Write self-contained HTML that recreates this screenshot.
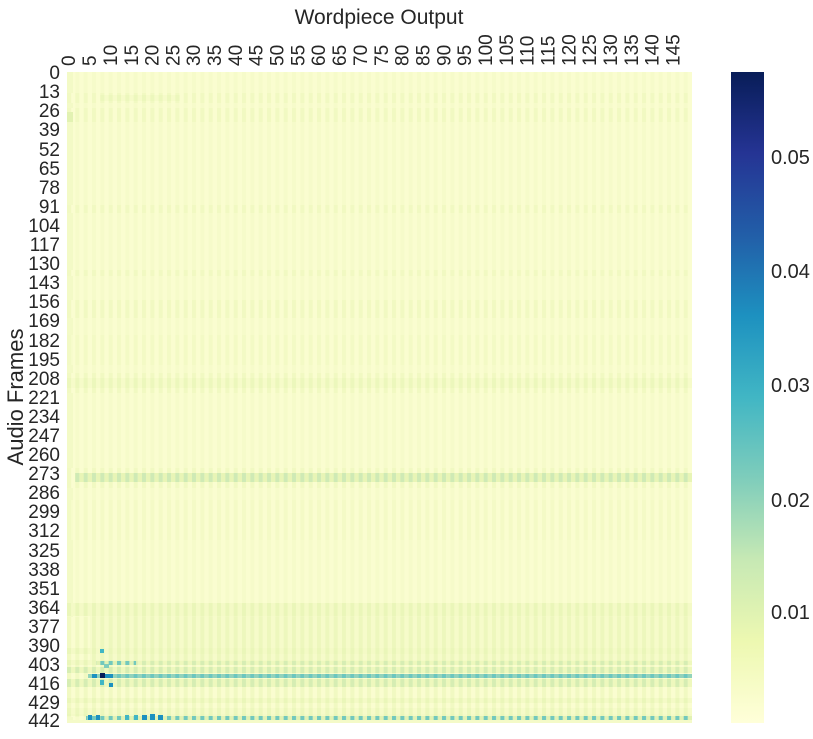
<!DOCTYPE html>
<html><head><meta charset="utf-8"><style>
html,body{margin:0;padding:0;background:#fff;width:813px;height:739px;overflow:hidden}
svg{display:block;font-family:"Liberation Sans",sans-serif}
</style></head><body>
<svg width="813" height="739" viewBox="0 0 813 739" xmlns="http://www.w3.org/2000/svg">
<defs>
<linearGradient id="cb" x1="0" y1="1" x2="0" y2="0">
<stop offset="0" stop-color="#ffffd9"/><stop offset="0.125" stop-color="#edf8b1"/>
<stop offset="0.25" stop-color="#c7e9b4"/><stop offset="0.375" stop-color="#7fcdbb"/>
<stop offset="0.5" stop-color="#41b6c4"/><stop offset="0.625" stop-color="#1d91c0"/>
<stop offset="0.75" stop-color="#225ea8"/><stop offset="0.875" stop-color="#253494"/>
<stop offset="1" stop-color="#081d58"/></linearGradient>
<pattern id="s1" patternUnits="userSpaceOnUse" x="67" width="8.334" height="10"><rect width="4.167" height="10" fill="#eaf6b9"/><rect x="4.167" width="4.167" height="10" fill="#f4fac6"/></pattern>
<pattern id="s2" patternUnits="userSpaceOnUse" x="67" width="8.334" height="10"><rect width="4.167" height="10" fill="#cfeab5"/><rect x="4.167" width="4.167" height="10" fill="#e8f5b6"/></pattern>
<pattern id="s3" patternUnits="userSpaceOnUse" x="67" width="8.334" height="10"><rect width="4.167" height="10" fill="#6cc6bf"/><rect x="4.167" width="4.167" height="10" fill="#92d3bb"/></pattern>
<pattern id="s4" patternUnits="userSpaceOnUse" x="67" width="8.334" height="10"><rect width="4.167" height="10" fill="#72c8bd"/><rect x="4.167" width="4.167" height="10" fill="#e2f2b4"/></pattern>
<pattern id="s5" patternUnits="userSpaceOnUse" x="67" width="8.334" height="10"><rect width="4.167" height="10" fill="#f1f9c2"/><rect x="4.167" width="4.167" height="10" fill="#fafdd0"/></pattern>
<pattern id="s6" patternUnits="userSpaceOnUse" x="67" width="8.334" height="10"><rect width="4.167" height="10" fill="#d6edb3"/><rect x="4.167" width="4.167" height="10" fill="#eef8bd"/></pattern>
</defs>
<text x="379" y="24" font-size="21" text-anchor="middle" fill="#262626">Wordpiece Output</text>
<text transform="translate(23,397) rotate(-90)" font-size="22" text-anchor="middle" fill="#262626">Audio Frames</text>
<!-- heatmap -->
<rect x="67" y="72" width="625" height="651" fill="#fafdd0"/>
<rect x="67" y="72" width="625" height="651" fill="url(#s5)" opacity="0.45"/>
<rect x="67" y="72" width="6" height="651" fill="#f3fac6"/>
<rect x="67" y="93" width="625" height="10" fill="url(#s5)"/>
<rect x="100" y="95" width="80" height="6" fill="url(#s1)" opacity="0.7"/>
<rect x="67" y="108" width="625" height="14" fill="url(#s5)"/>
<rect x="67" y="112" width="6" height="10" fill="#e2f2b2"/>
<rect x="67" y="205" width="625" height="8" fill="url(#s5)"/>
<rect x="67" y="270" width="625" height="6" fill="url(#s5)"/>
<rect x="67" y="300" width="625" height="18" fill="url(#s5)"/>
<rect x="67" y="335" width="625" height="30" fill="url(#s5)" opacity="0.6"/>
<rect x="67" y="373" width="625" height="20" fill="url(#s5)"/>
<rect x="67" y="378" width="625" height="10" fill="url(#s1)" opacity="0.7"/>
<rect x="67" y="468" width="625" height="20" fill="url(#s5)"/>
<rect x="75" y="473" width="617" height="9" fill="url(#s2)"/>
<rect x="67" y="500" width="625" height="40" fill="url(#s5)" opacity="0.5"/>
<rect x="67" y="603" width="625" height="13" fill="url(#s1)"/>
<rect x="67" y="617" width="625" height="100" fill="url(#s5)"/>
<rect x="90" y="616" width="602" height="45" fill="url(#s1)" opacity="0.6"/>
<rect x="67" y="648" width="625" height="6" fill="url(#s1)"/>
<rect x="67" y="660" width="625" height="5" fill="url(#s1)"/>
<rect x="96" y="661" width="40" height="4" fill="url(#s4)"/>
<rect x="136" y="661" width="556" height="4" fill="url(#s6)"/>
<rect x="67" y="667" width="625" height="6" fill="url(#s6)"/>
<rect x="88" y="674" width="604" height="4" fill="url(#s3)"/>
<rect x="67" y="679" width="625" height="8" fill="url(#s6)"/>
<rect x="67" y="698" width="625" height="5" fill="url(#s1)"/>
<rect x="67" y="708" width="625" height="6" fill="url(#s1)" opacity="0.7"/>
<rect x="67" y="714" width="625" height="2" fill="url(#s1)"/>
<rect x="86" y="716" width="606" height="4" fill="url(#s4)"/>
<rect x="67" y="720" width="625" height="3" fill="#f4fac8"/>
<rect x="100" y="673" width="5" height="5" fill="#081d58"/>
<rect x="92" y="674" width="5" height="4" fill="#1d91c0"/>
<rect x="105" y="674" width="8" height="4" fill="#1d91c0"/>
<rect x="100" y="680" width="4" height="5" fill="#41b6c4"/>
<rect x="109" y="683" width="4" height="4" fill="#1d91c0"/>
<rect x="100" y="649" width="4" height="4" fill="#41b6c4"/>
<rect x="104" y="664" width="5" height="4" fill="#7fcdbb"/>
<rect x="88" y="715" width="4" height="5" fill="#1d91c0"/>
<rect x="96" y="715" width="4" height="5" fill="#1d91c0"/>
<rect x="142" y="715" width="5" height="5" fill="#1d91c0"/>
<rect x="150" y="714" width="5" height="6" fill="#1d91c0"/>
<rect x="158" y="715" width="5" height="5" fill="#1d91c0"/>
<rect x="134" y="715" width="4" height="5" fill="#41b6c4"/>
<rect x="125" y="715" width="4" height="5" fill="#41b6c4"/>
<!-- colorbar -->
<rect x="731" y="72" width="33" height="651" fill="url(#cb)"/>
<g font-size="20" fill="#262626">
<text x="771" y="619">0.01</text><text x="771" y="507">0.02</text><text x="771" y="392">0.03</text><text x="771" y="278">0.04</text><text x="771" y="164">0.05</text>
</g>
<!-- row labels -->
<g font-size="19" fill="#262626" text-anchor="end">
<text x="60" y="79">0</text><text x="60" y="98">13</text><text x="60" y="117">26</text><text x="60" y="136">39</text><text x="60" y="156">52</text><text x="60" y="175">65</text><text x="60" y="194">78</text><text x="60" y="213">91</text><text x="60" y="232">104</text><text x="60" y="251">117</text><text x="60" y="270">130</text><text x="60" y="289">143</text><text x="60" y="308">156</text><text x="60" y="327">169</text><text x="60" y="347">182</text><text x="60" y="366">195</text><text x="60" y="385">208</text><text x="60" y="404">221</text><text x="60" y="423">234</text><text x="60" y="442">247</text><text x="60" y="461">260</text><text x="60" y="480">273</text><text x="60" y="499">286</text><text x="60" y="518">299</text><text x="60" y="537">312</text><text x="60" y="557">325</text><text x="60" y="576">338</text><text x="60" y="595">351</text><text x="60" y="614">364</text><text x="60" y="633">377</text><text x="60" y="652">390</text><text x="60" y="671">403</text><text x="60" y="690">416</text><text x="60" y="709">429</text><text x="60" y="727">442</text>
</g>
<!-- column labels -->
<g font-size="19" fill="#262626">
<text transform="translate(75,66) rotate(-90)">0</text>
<text transform="translate(96,66) rotate(-90)">5</text>
<text transform="translate(117,66) rotate(-90)">10</text>
<text transform="translate(138,66) rotate(-90)">15</text>
<text transform="translate(158.5,66) rotate(-90)">20</text>
<text transform="translate(179.3,66) rotate(-90)">25</text>
<text transform="translate(200.2,66) rotate(-90)">30</text>
<text transform="translate(221,66) rotate(-90)">35</text>
<text transform="translate(241.9,66) rotate(-90)">40</text>
<text transform="translate(262.7,66) rotate(-90)">45</text>
<text transform="translate(283.5,66) rotate(-90)">50</text>
<text transform="translate(304.4,66) rotate(-90)">55</text>
<text transform="translate(325.2,66) rotate(-90)">60</text>
<text transform="translate(346.1,66) rotate(-90)">65</text>
<text transform="translate(366.9,66) rotate(-90)">70</text>
<text transform="translate(387.8,66) rotate(-90)">75</text>
<text transform="translate(408.6,66) rotate(-90)">80</text>
<text transform="translate(429.4,66) rotate(-90)">85</text>
<text transform="translate(450.3,66) rotate(-90)">90</text>
<text transform="translate(471.1,66) rotate(-90)">95</text>
<text transform="translate(492,66) rotate(-90)">100</text>
<text transform="translate(512.8,66) rotate(-90)">105</text>
<text transform="translate(533.6,66) rotate(-90)">110</text>
<text transform="translate(554.5,66) rotate(-90)">115</text>
<text transform="translate(575.3,66) rotate(-90)">120</text>
<text transform="translate(596.2,66) rotate(-90)">125</text>
<text transform="translate(617,66) rotate(-90)">130</text>
<text transform="translate(637.9,66) rotate(-90)">135</text>
<text transform="translate(658.7,66) rotate(-90)">140</text>
<text transform="translate(679.5,66) rotate(-90)">145</text>
</g>
</svg>
</body></html>
